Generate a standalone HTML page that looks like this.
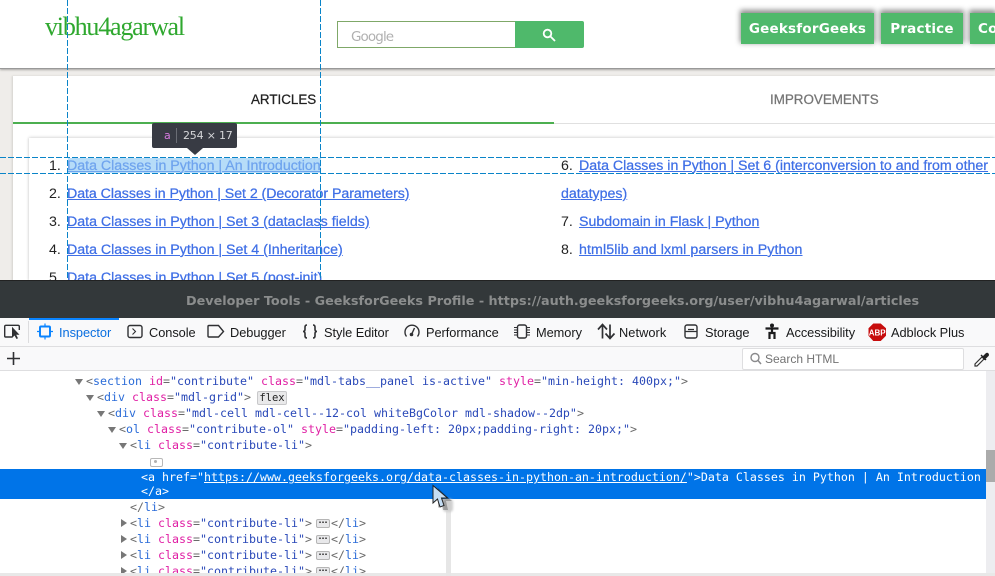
<!DOCTYPE html>
<html><head><meta charset="utf-8"><style>
html,body{margin:0;padding:0;width:995px;height:576px;overflow:hidden;background:#fff}
div,span,a{position:absolute;white-space:pre}
span.c,span.n,span.v,span.m{position:static}
.link{font:14.2px "Liberation Sans",sans-serif;color:#3f6fe6;text-decoration:underline;line-height:17px;-webkit-text-stroke:.25px #3f6fe6}
.num{font:14.2px "Liberation Sans",sans-serif;color:#222;line-height:17px}
.btn{background:#4fb96b;color:#fff;font:bold 13.5px "DejaVu Sans",sans-serif;letter-spacing:.2px;top:13px;height:31px;line-height:33px;box-shadow:0 -2px 5px 1px rgba(0,0,0,.45)}
.tool{font:12.8px "Liberation Sans",sans-serif;color:#18191a;top:325px;line-height:15px;letter-spacing:-.05px}
.code{font:11.64px/16px "DejaVu Sans Mono",monospace;color:#6a6a6a}
.n{color:#2b6cd8}.m{color:#e01fa4}.v{color:#2948b8}
.tri{width:0;height:0;border-left:4px solid transparent;border-right:4px solid transparent;border-top:6px solid #777}
.trr{width:0;height:0;border-top:4px solid transparent;border-bottom:4px solid transparent;border-left:6px solid #777}
.dots{width:12px;height:7px;background:#e8e8ea;border:1px solid #b5b5b5;border-radius:2px;color:#222;font:bold 8px/5px "DejaVu Sans",sans-serif;text-align:center}
.dv{width:1px;background:repeating-linear-gradient(to bottom,#0a84c8 0 6px,transparent 6px 8px)}
.dh{height:1px;background:repeating-linear-gradient(to right,#0a84c8 0 6px,transparent 6px 8px)}
</style></head><body>

<!-- page -->
<div style="left:0;top:69px;width:995px;height:212px;background:#efedea"></div>
<div style="left:0;top:0;width:995px;height:68px;background:#fff;border-bottom:1px solid #999;box-shadow:0 1px 2px rgba(0,0,0,.3)"></div>
<div style="left:45px;top:11px;font:26px/32px 'Liberation Serif',serif;color:#2fa82f;letter-spacing:-1.2px">vibhu4agarwal</div>

<div style="left:337px;top:21px;width:177px;height:25px;border:1px solid #7fa868;border-right:0;background:#fff"></div>
<div style="left:351px;top:29px;font:13.5px/16px 'DejaVu Sans',sans-serif;color:#b0b0b0;letter-spacing:-.9px">Google</div>
<div style="left:515px;top:21px;width:69px;height:27px;background:#4fb96b;border-radius:0 2px 2px 0"></div>
<svg style="position:absolute;left:541px;top:27px" width="16" height="16" viewBox="0 0 16 16" fill="none" stroke="#fff" stroke-width="1.8"><circle cx="6.5" cy="6.5" r="3.8"/><path d="M9.5 9.5L14 14"/></svg>

<div class="btn" style="left:741px;width:133px;text-align:center">GeeksforGeeks</div>
<div class="btn" style="left:881px;width:82px;text-align:center">Practice</div>
<div class="btn" style="left:970px;width:17px;padding-left:8px;overflow:hidden">Contribute</div>

<div style="left:13px;top:76px;width:982px;height:205px;background:#fff;box-shadow:-1px 0 2px rgba(0,0,0,.12)"></div>
<div style="left:251px;top:92px;font:13.4px/16px 'Liberation Sans',sans-serif;color:#222;-webkit-text-stroke:.25px #222">ARTICLES</div>
<div style="left:770px;top:92px;font:13.4px/16px 'Liberation Sans',sans-serif;color:#757575;-webkit-text-stroke:.25px #757575">IMPROVEMENTS</div>
<div style="left:13px;top:122px;width:541px;height:2px;background:#4caf50"></div>
<div style="left:554px;top:123px;width:441px;height:1px;background:#e0e0e0"></div>
<div style="left:29px;top:138px;width:966px;height:143px;background:#fff;box-shadow:0 -1px 3px rgba(0,0,0,.12),-1px 0 2px rgba(0,0,0,.08)"></div>

<div class="num" style="left:49px;top:158px">1.</div>
<div style="left:68px;top:158px;width:253px;height:15px;background:#b6dcf8"></div>
<a class="link" style="left:67px;top:158px;color:#6fa4ee;-webkit-text-stroke:.25px #6fa4ee">Data Classes in Python | An Introduction</a>
<div class="num" style="left:49px;top:186px">2.</div><a class="link" style="left:67px;top:186px;letter-spacing:-.05px">Data Classes in Python | Set 2 (Decorator Parameters)</a>
<div class="num" style="left:49px;top:214px">3.</div><a class="link" style="left:67px;top:214px">Data Classes in Python | Set 3 (dataclass fields)</a>
<div class="num" style="left:49px;top:242px">4.</div><a class="link" style="left:67px;top:242px">Data Classes in Python | Set 4 (Inheritance)</a>
<div class="num" style="left:49px;top:270px">5.</div><a class="link" style="left:67px;top:270px">Data Classes in Python | Set 5 (post-init)</a>
<div class="num" style="left:561px;top:158px">6.</div><a class="link" style="left:579px;top:158px">Data Classes in Python | Set 6 (interconversion to and from other</a>
<a class="link" style="left:561px;top:186px">datatypes)</a>
<div class="num" style="left:561px;top:214px">7.</div><a class="link" style="left:579px;top:214px">Subdomain in Flask | Python</a>
<div class="num" style="left:561px;top:242px">8.</div><a class="link" style="left:579px;top:242px;letter-spacing:.1px">html5lib and lxml parsers in Python</a>

<!-- guides -->
<div class="dv" style="left:67px;top:0;height:281px"></div>
<div class="dv" style="left:320px;top:0;height:281px"></div>
<div class="dh" style="left:0;top:157px;width:995px"></div>
<div class="dh" style="left:0;top:173px;width:995px"></div>

<div style="left:152px;top:123px;width:85px;height:25px;background:#383b44;border-radius:2px"></div>
<div style="left:187px;top:148px;width:0;height:0;border-left:8px solid transparent;border-right:8px solid transparent;border-top:7px solid #383b44"></div>
<div style="left:164px;top:128px;font:11px/15px 'DejaVu Sans',sans-serif;color:#d67ae0">a</div>
<div style="left:176px;top:128px;width:1px;height:15px;background:#6a6d75"></div>
<div style="left:183px;top:128px;font:11px/15px 'DejaVu Sans',sans-serif;color:#d5d6d9;letter-spacing:-.2px">254 × 17</div>

<!-- devtools title -->
<div style="left:0;top:280px;width:995px;height:38px;background:#33383a;border-top:1px solid #222"></div>
<div style="left:186px;top:294px;width:740px;overflow:hidden;font:bold 12.78px/16px 'DejaVu Sans',sans-serif;color:#8b8d8d">Developer Tools - GeeksforGeeks Profile - https://auth.geeksforgeeks.org/user/vibhu4agarwal/articles</div>

<!-- toolbar -->
<div style="left:0;top:318px;width:995px;height:52px;background:#f9f9fa"></div>
<div style="left:0;top:346px;width:995px;height:1px;background:#dedee0"></div>
<div style="left:0;top:370px;width:995px;height:1px;background:#dedee0"></div>
<div style="left:29px;top:318px;width:90px;height:2px;background:#0a84ff"></div>
<div style="left:28px;top:321px;width:1px;height:22px;background:#dcdcde"></div>
<div style="left:742px;top:348px;width:220px;height:20px;background:#fff;border:1px solid #dedee0;border-radius:2px"></div>

<svg style="position:absolute;left:0;top:318px" width="995" height="54" viewBox="0 0 995 54" fill="none" stroke="#2f3033" stroke-width="1.4">
<path d="M12 19H5.5Q4.700 19 4.700 18V8.500Q4.700 7.300 6 7.300H18Q19.300 7.300 19.300 8.500V12"/>
<path d="M12 8.800L12 20L14.500 17.500L16.500 21L18 20.200L16.200 16.800H19.500Z" fill="#2f3033" stroke="none"/>
<g stroke="#0a84ff" stroke-width="2"><rect x="40" y="8.500" width="10" height="10" rx="1"/><path d="M45 5.500V8M45 19V21.500M37 13.500H39.500M50.500 13.500H53" stroke-width="1.200"/></g>
<rect x="128" y="7.500" width="14" height="12" rx="2"/><path d="M132.500 10.500L135.500 13.500L132.500 16.500" stroke-width="1.100"/>
<path d="M209 7.500H218.500L223.500 13.500L218.500 19H209Q208 19 208 18V8.500Q208 7.500 209 7.500Z"/>
<path d="M307 7Q305 7 305 9V11.500Q305 13.500 303 13.500Q305 13.500 305 15.500V18Q305 20 307 20M313 7Q315 7 315 9V11.500Q315 13.500 317 13.500Q315 13.500 315 15.500V18Q315 20 313 20" stroke-width="1.600"/>
<path d="M406.500 18.500A7 7 0 1 1 417.500 18.500"/><path d="M412 15.500L414.500 10" stroke-width="1.400"/><circle cx="411.500" cy="16.500" r="1.800" fill="#2f3033" stroke="none"/>
<rect x="517.500" y="7" width="9" height="13" rx="2"/><path d="M514 9.500H517M514 12H517M514 14.500H517M514 17H517M527 9.500H530M527 12H530M527 14.500H530M527 17H530" stroke-width="1"/>
<path d="M602.500 20.500V7.500M598 11.500L602.500 6.500L607 11.500M610 6.500V19.500M605.500 15.500L610 20.500L614.500 15.500" stroke-width="1.700"/>
<rect x="685" y="7" width="12" height="13" rx="2"/><path d="M688 11.500H694M685 13.500H697" stroke-width="1.200"/>
<circle cx="772" cy="7.500" r="2" fill="#1c1c1d" stroke="none"/><path d="M765.500 10.500H778.500M772 11V15M769.500 21V15H774.500V21" stroke="#1c1c1d" stroke-width="2.200"/>
<path d="M7 40.500H20M13.500 34V47" stroke-width="1.600"/>
<circle cx="755" cy="39.500" r="4" stroke="#8a8a8c"/><path d="M758 42.500L761 46" stroke="#8a8a8c" stroke-width="1.500"/>
</svg>
<svg style="position:absolute;left:868px;top:323px" width="19" height="19" viewBox="0 0 19 19"><path d="M5.500 1H12.500L17.500 5.500V12.500L12.500 17.500H5.500L1 12.500V5.500Z" fill="#c70d0d" stroke="#c70d0d" stroke-width="1"/><text x="9.200" y="12.500" text-anchor="middle" font-family="Liberation Sans,sans-serif" font-size="8" font-weight="bold" fill="#fff">ABP</text></svg>
<svg style="position:absolute;left:973px;top:351px" width="17" height="17" viewBox="0 0 17 17" fill="none"><path d="M2 15L2 13L9 6L11 8L4 15Z" stroke="#333" stroke-width="1.200" fill="#fff"/><path d="M8 4L13 9M10 6L13 3Q14.500 2 15 3Q15.800 4.200 14.500 5L11.500 8Z" stroke="#222" stroke-width="1.400" fill="#222"/></svg>

<div class="tool" style="left:59px;color:#0a6fe0">Inspector</div>
<div class="tool" style="left:149px">Console</div>
<div class="tool" style="left:230px">Debugger</div>
<div class="tool" style="left:324px">Style Editor</div>
<div class="tool" style="left:426px">Performance</div>
<div class="tool" style="left:536px">Memory</div>
<div class="tool" style="left:619px;letter-spacing:.05px">Network</div>
<div class="tool" style="left:705px">Storage</div>
<div class="tool" style="left:786px">Accessibility</div>
<div class="tool" style="left:891px">Adblock Plus</div>

<div style="left:765px;top:352px;font:12px/14px 'Liberation Sans',sans-serif;color:#737373">Search HTML</div>

<!-- markup -->
<div style="left:986px;top:371px;width:9px;height:203px;background:#ededf0"></div>
<div style="left:986px;top:450px;width:9px;height:32px;background:#ababab"></div>
<div style="left:0;top:469px;width:986px;height:30px;background:#0074e8"></div>
<div style="left:0;top:573px;width:995px;height:3px;background:#e8e8e8"></div>

<div class="tri" style="left:75px;top:379px"></div>
<div class="code" style="left:86px;top:373px">&lt;<span class="n">section</span> <span class="m">id</span>=<span class="v">"contribute"</span> <span class="m">class</span>=<span class="v">"mdl-tabs__panel is-active"</span> <span class="m">style</span>=<span class="v">"min-height: 400px;"</span>&gt;</div>
<div class="tri" style="left:86px;top:395px"></div>
<div class="code" style="left:97px;top:389px">&lt;<span class="n">div</span> <span class="m">class</span>=<span class="v">"mdl-grid"</span>&gt;</div>
<div style="left:257px;top:391px;width:28px;height:12px;background:#e9e9ea;border:1px solid #c8c8ca;border-radius:2px;font:10.500px/12px 'DejaVu Sans Mono',monospace;color:#222;text-align:center">flex</div>
<div class="tri" style="left:97px;top:411px"></div>
<div class="code" style="left:108px;top:405px">&lt;<span class="n">div</span> <span class="m">class</span>=<span class="v">"mdl-cell mdl-cell--12-col whiteBgColor mdl-shadow--2dp"</span>&gt;</div>
<div class="tri" style="left:108px;top:427px"></div>
<div class="code" style="left:119px;top:421px">&lt;<span class="n">ol</span> <span class="m">class</span>=<span class="v">"contribute-ol"</span> <span class="m">style</span>=<span class="v">"padding-left: 20px;padding-right: 20px;"</span>&gt;</div>
<div class="tri" style="left:119px;top:443px"></div>
<div class="code" style="left:130px;top:437px">&lt;<span class="n">li</span> <span class="m">class</span>=<span class="v">"contribute-li"</span>&gt;</div>
<div style="left:150px;top:458px;width:11px;height:7px;border:1px solid #b8b8b8;border-radius:2px;background:#fff"></div>
<div style="left:154px;top:460px;width:3px;height:3px;border-radius:2px;background:#b0b0b0"></div>
<div class="code" style="left:141px;top:469px;color:#fff">&lt;a href="<span style="position:static;text-decoration:underline">https://www.geeksforgeeks.org/data-classes-in-python-an-introduction/</span>"&gt;Data Classes in Python | An Introduction</div>
<div class="code" style="left:141px;top:483px;color:#fff">&lt;/a&gt;</div>
<div class="code" style="left:130px;top:499px">&lt;/<span class="n">li</span>&gt;</div>

<div class="trr" style="left:121px;top:519px"></div>
<div class="code" style="left:130px;top:515px">&lt;<span class="n">li</span> <span class="m">class</span>=<span class="v">"contribute-li"</span>&gt;</div><div class="dots" style="left:316px;top:519px">···</div><div class="code" style="left:331px;top:515px">&lt;/<span class="n">li</span>&gt;</div>
<div class="trr" style="left:121px;top:535px"></div>
<div class="code" style="left:130px;top:531px">&lt;<span class="n">li</span> <span class="m">class</span>=<span class="v">"contribute-li"</span>&gt;</div><div class="dots" style="left:316px;top:535px">···</div><div class="code" style="left:331px;top:531px">&lt;/<span class="n">li</span>&gt;</div>
<div class="trr" style="left:121px;top:551px"></div>
<div class="code" style="left:130px;top:547px">&lt;<span class="n">li</span> <span class="m">class</span>=<span class="v">"contribute-li"</span>&gt;</div><div class="dots" style="left:316px;top:551px">···</div><div class="code" style="left:331px;top:547px">&lt;/<span class="n">li</span>&gt;</div>
<div style="left:0;top:563px;width:986px;height:10px;overflow:hidden">
<div class="trr" style="left:121px;top:4px"></div>
<div class="code" style="left:130px;top:0">&lt;<span class="n">li</span> <span class="m">class</span>=<span class="v">"contribute-li"</span>&gt;</div><div class="dots" style="left:316px;top:4px">···</div><div class="code" style="left:331px;top:0">&lt;/<span class="n">li</span>&gt;</div>
</div>

<!-- cursor -->
<div style="left:446px;top:505px;width:5px;height:71px;background:#e6e6e6"></div>
<div style="left:443px;top:499px;width:10px;height:13px;background:#cfcfcf;border-radius:3px;filter:blur(1px)"></div>
<svg style="position:absolute;left:430px;top:484px" width="26" height="30" viewBox="0 0 26 30"><path d="M8 4L22 17L16 17L18 26L13 26L12 20L8 24Z" fill="#000" opacity=".25"/><path d="M3 1.500V19L7.500 15L10 23L14 21.500L11.500 14H17.500Z" fill="#c4ddf4" stroke="#222" stroke-width="1"/></svg>
</body></html>
